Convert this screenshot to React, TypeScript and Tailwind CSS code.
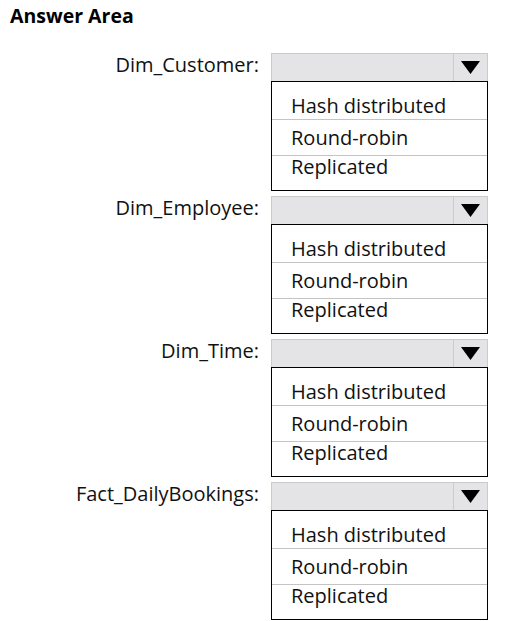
import React from "react";

const rows = ["Dim_Customer:", "Dim_Employee:", "Dim_Time:", "Fact_DailyBookings:"];

function Dropdown() {
  return (
    <div className="w-[217px]">
      <div className="h-[28px] flex border border-[#cbcbcb] border-b-0 bg-[#e4e4e6]">
        <div className="flex-1" />
        <div className="w-[34px] border-l border-[#cbcbcb] flex items-center justify-center">
          <svg width="19" height="13" viewBox="0 0 19 13">
            <polygon points="0,0 19,0 9.5,13" fill="#000" />
          </svg>
        </div>
      </div>
      <div className="border border-black bg-white text-[20px] leading-[24px] text-[#111]">
        <div className="h-[38px] pl-[19px] flex items-center pt-[10px] border-b border-[#c4c4c4]">Hash distributed</div>
        <div className="h-[36px] pl-[19px] flex items-center border-b border-[#c4c4c4]">Round-robin</div>
        <div className="h-[34px] pl-[19px] flex items-center pb-[12px]">Replicated</div>
      </div>
    </div>
  );
}

export default function App() {
  return (
    <div className="w-[518px] h-[621px] bg-white text-black" style={{ fontFamily: '"Open Sans", "Noto Sans", sans-serif' }}>
      <div className="pl-[10px] pt-[4px] text-[19.5px] leading-[24px] font-bold">Answer Area</div>
      <div className="mt-[25px] flex flex-col gap-[5px]">
        {rows.map((r) => (
          <div key={r} className="flex">
            <div className="w-[259px] h-[28px] flex items-center justify-end pb-[5px] text-[20px] leading-[24px] text-[#111]">{r}</div>
            <div className="ml-[12px]">
              <Dropdown />
            </div>
          </div>
        ))}
      </div>
    </div>
  );
}
